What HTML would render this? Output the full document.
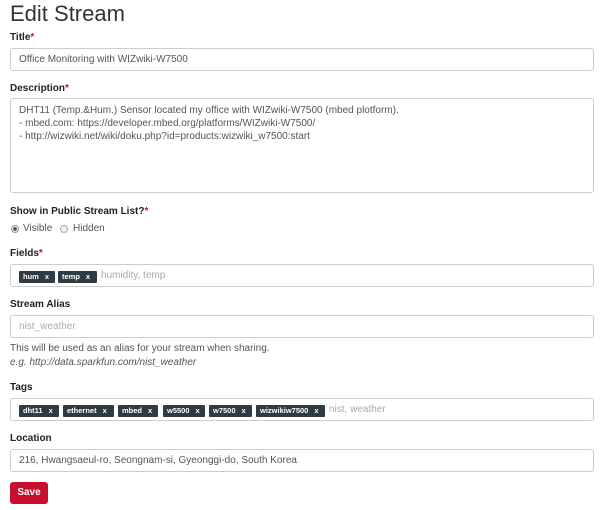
<!DOCTYPE html>
<html><head><style>
body{margin:0;width:600px;height:510px;background:#fff;font-family:"Liberation Sans",sans-serif;color:#333;position:relative;overflow:hidden}
.a{position:absolute}
h1{position:absolute;left:10px;top:2px;margin:0;font-size:22px;font-weight:normal;color:#333;line-height:24px}
.l{position:absolute;left:10px;font-size:10px;font-weight:bold;color:#222}
.l i{color:#c8102e;font-style:normal}
.in{position:absolute;left:10px;width:584px;border:1px solid #ccc;border-radius:3px;background:#fff;box-sizing:border-box;font-size:10px;color:#555;padding-left:8px}
.t{position:absolute;top:6px;height:12px;background:#2f3b43;color:#fff;font-size:7.5px;font-weight:bold;line-height:12px;padding:0 4px;border-radius:1px;box-sizing:border-box;white-space:nowrap}
.t b{margin-left:6px}
.ph{color:#aaa}
</style></head><body>
<h1>Edit Stream</h1>
<div class="l" style="top:32px">Title<i>*</i></div>
<div class="in" style="top:48px;height:23px;line-height:22px">Office Monitoring with WIZwiki-W7500</div>
<div class="l" style="top:83px">Description<i>*</i></div>
<div class="in" style="top:98px;height:95px;line-height:13px;padding-top:5px">DHT11 (Temp.&amp;Hum.) Sensor located my office with WIZwiki-W7500 (mbed plotform).<br>- mbed.com: https://developer.mbed.org/platforms/WIZwiki-W7500/<br>- http://wizwiki.net/wiki/doku.php?id=products:wizwiki_w7500:start</div>
<div class="l" style="top:206px">Show in Public Stream List?<i>*</i></div>
<div class="a" style="left:11px;top:225px;width:6px;height:6px;border:1px solid #999;border-radius:50%;background:radial-gradient(#555 40%,#eee 50%)"></div>
<div class="a" style="left:23px;top:223px;font-size:10px;color:#555">Visible</div>
<div class="a" style="left:60px;top:225px;width:6px;height:6px;border:1px solid #aaa;border-radius:50%;background:#eee"></div>
<div class="a" style="left:73px;top:223px;font-size:10px;color:#555">Hidden</div>
<div class="l" style="top:248px">Fields<i>*</i></div>
<div class="in" style="top:264px;height:23px">
<div class="t" style="left:8px;width:36px">hum<b>x</b></div>
<div class="t" style="left:47px;width:39px">temp<b>x</b></div>
<div class="a ph" style="left:90px;top:5px">humidity, temp</div></div>
<div class="l" style="top:299px">Stream Alias</div>
<div class="in ph" style="top:315px;height:23px;line-height:22px">nist_weather</div>
<div class="a" style="left:10px;top:343px;font-size:10px;color:#555">This will be used as an alias for your stream when sharing.</div>
<div class="a" style="left:10px;top:357px;font-size:10px;color:#555;font-style:italic">e.g. http://data.sparkfun.com/nist_weather</div>
<div class="l" style="top:382px">Tags</div>
<div class="in" style="top:398px;height:23px">
<div class="t" style="left:8px;width:40px">dht11<b>x</b></div>
<div class="t" style="left:52px;width:51px">ethernet<b>x</b></div>
<div class="t" style="left:107px;width:40px">mbed<b>x</b></div>
<div class="t" style="left:152px;width:42px">w5500<b>x</b></div>
<div class="t" style="left:198px;width:43px">w7500<b>x</b></div>
<div class="t" style="left:245px;width:69px">wizwikiw7500<b>x</b></div>
<div class="a ph" style="left:318px;top:5px">nist, weather</div></div>
<div class="l" style="top:433px">Location</div>
<div class="in" style="top:449px;height:23px;line-height:22px">216, Hwangsaeul-ro, Seongnam-si, Gyeonggi-do, South Korea</div>
<div class="a" style="left:10px;top:482px;width:38px;height:22px;background:#c8102e;border-radius:3px;color:#fff;font-size:10px;font-weight:bold;text-align:center;line-height:22px">Save</div>
</body></html>
